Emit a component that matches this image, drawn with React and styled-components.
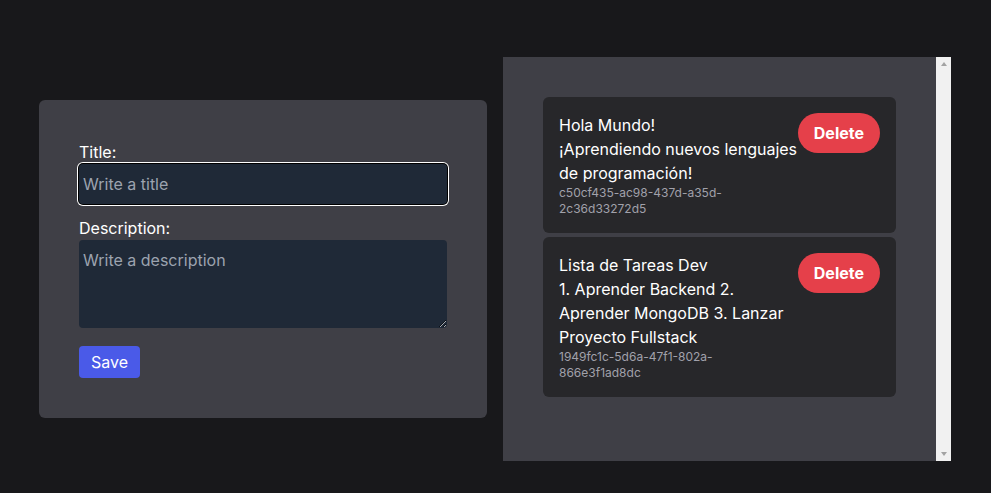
import React from 'react';
import styled, { createGlobalStyle } from 'styled-components';

const GlobalStyle = createGlobalStyle`
  html, body {
    margin: 0;
    padding: 0;
    background: #18181b;
    font-family: Inter, "Noto Sans", sans-serif;
    color: #ffffff;
  }
  * { box-sizing: border-box; }
`;

const tasks = [
  {
    id: 'c50cf435-ac98-437d-a35d-2c36d33272d5',
    title: 'Hola Mundo!',
    description: '¡Aprendiendo nuevos lenguajes de programación!',
  },
  {
    id: '1949fc1c-5d6a-47f1-802a-866e3f1ad8dc',
    title: 'Lista de Tareas Dev',
    description: '1. Aprender Backend 2. Aprender MongoDB 3. Lanzar Proyecto Fullstack',
  },
];

const App = () => {
  return (
    <>
      <GlobalStyle />
      <Page>
        <FormPanel onSubmit={(e) => e.preventDefault()}>
          <Label htmlFor="title">Title:</Label>
          <TitleInput id="title" placeholder="Write a title" />
          <Label htmlFor="description" $spaced>Description:</Label>
          <DescriptionArea id="description" rows={3} placeholder="Write a description" />
          <SaveButton type="submit">Save</SaveButton>
        </FormPanel>

        <ListPanel>
          <ListScroll>
            {tasks.map((task) => (
              <Card key={task.id}>
                <CardText>
                  <Heading>{task.title}</Heading>
                  <Body>{task.description}</Body>
                  <TaskId>{task.id}</TaskId>
                </CardText>
                <DeleteButton>Delete</DeleteButton>
              </Card>
            ))}
          </ListScroll>
          <ScrollTrack aria-hidden="true">
            <Arrow $dir="up" />
            <Arrow $dir="down" />
          </ScrollTrack>
        </ListPanel>
      </Page>
    </>
  );
};

const Page = styled.main`
  display: flex;
  justify-content: center;
  align-items: center;
  gap: 16px;
  padding: 57px 1px 32px 0;
`;

const FormPanel = styled.form`
  width: 448px;
  padding: 40px;
  background: #3f3f46;
  border-radius: 6px;
  display: flex;
  flex-direction: column;
  align-items: flex-start;
`;

const Label = styled.label`
  display: block;
  font-size: 16px;
  line-height: 24px;
  margin-top: ${(p) => (p.$spaced ? '12px' : '0')};
`;

const fieldBase = `
  display: block;
  width: 100%;
  background: #1f2937;
  color: #ffffff;
  font-family: Inter, "Noto Sans", sans-serif;
  font-size: 16px;
  line-height: 24px;
  padding: 8px 4px;
  border: none;
  border-radius: 4px;
  &::placeholder { color: #9ca3af; }
`;

const TitleInput = styled.input`
  ${fieldBase}
  height: 40px;
  outline: none;
  box-shadow: 0 0 0 1px #000000, 0 0 0 2px #ffffff;
`;

const DescriptionArea = styled.textarea`
  ${fieldBase}
  height: 88px;
  resize: vertical;
  margin-bottom: 18px;
  &:focus { outline: none; }
`;

const SaveButton = styled.button`
  background: #4a5ae8;
  color: #ffffff;
  border: none;
  border-radius: 4px;
  padding: 4px 12px;
  font-family: Inter, "Noto Sans", sans-serif;
  font-size: 16px;
  line-height: 24px;
  cursor: pointer;
`;

const ListPanel = styled.section`
  width: 448px;
  height: 404px;
  background: #3f3f46;
  display: flex;
`;

const ListScroll = styled.div`
  flex: 1;
  min-width: 0;
  padding: 40px;
  overflow-y: auto;
  display: flex;
  flex-direction: column;
  gap: 4px;
`;

const ScrollTrack = styled.div`
  width: 15px;
  flex-shrink: 0;
  background: #f1f1f1;
  display: flex;
  flex-direction: column;
  justify-content: space-between;
  align-items: center;
  padding: 5px 0;
`;

const Arrow = styled.span`
  width: 0;
  height: 0;
  border-left: 3.5px solid transparent;
  border-right: 3.5px solid transparent;
  ${(p) =>
    p.$dir === 'up'
      ? 'border-bottom: 4px solid #a3a3a3;'
      : 'border-top: 4px solid #a3a3a3;'}
`;

const Card = styled.article`
  display: flex;
  justify-content: space-between;
  align-items: flex-start;
  padding: 16px;
  background: #27272a;
  border-radius: 6px;
  flex-shrink: 0;
`;

const CardText = styled.div`
  flex: 1;
  min-width: 0;
`;

const Heading = styled.h3`
  margin: 0;
  font-size: 16px;
  font-weight: 400;
  line-height: 24px;
`;

const Body = styled.p`
  margin: 0;
  font-size: 16px;
  line-height: 24px;
`;

const TaskId = styled.p`
  margin: 0;
  padding-right: 8px;
  font-size: 12px;
  line-height: 16px;
  color: #a1a1aa;
`;

const DeleteButton = styled.button`
  flex-shrink: 0;
  background: #e5404a;
  color: #ffffff;
  border: none;
  border-radius: 9999px;
  padding: 8px 16px;
  font-family: Inter, "Noto Sans", sans-serif;
  font-size: 16px;
  font-weight: 700;
  line-height: 24px;
  cursor: pointer;
`;

export default App;
